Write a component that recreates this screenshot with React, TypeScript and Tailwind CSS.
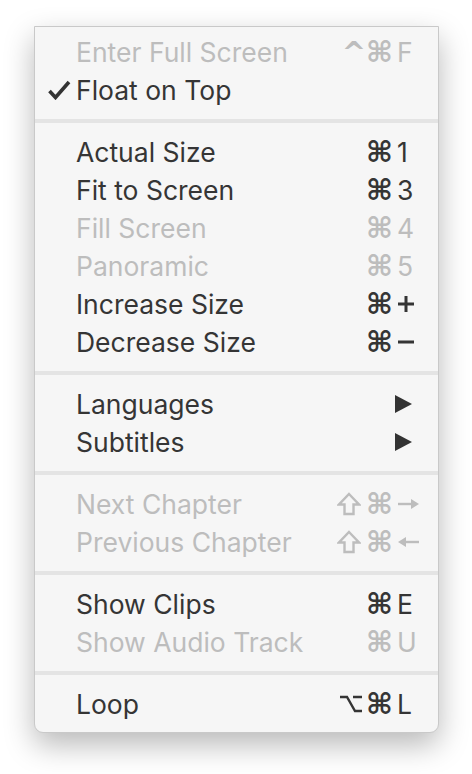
import React from "react";

type Item = {
  label: string;
  mods?: string;
  keyChar?: string;
  disabled?: boolean;
  checked?: boolean;
  submenu?: boolean;
};

const sections: Item[][] = [
  [
    { label: "Enter Full Screen", mods: "^⌘", keyChar: "F", disabled: true },
    { label: "Float on Top", checked: true },
  ],
  [
    { label: "Actual Size", mods: "⌘", keyChar: "1" },
    { label: "Fit to Screen", mods: "⌘", keyChar: "3" },
    { label: "Fill Screen", mods: "⌘", keyChar: "4", disabled: true },
    { label: "Panoramic", mods: "⌘", keyChar: "5", disabled: true },
    { label: "Increase Size", mods: "⌘", keyChar: "+" },
    { label: "Decrease Size", mods: "⌘", keyChar: "−" },
  ],
  [
    { label: "Languages", submenu: true },
    { label: "Subtitles", submenu: true },
  ],
  [
    { label: "Next Chapter", mods: "⇧⌘", keyChar: "→", disabled: true },
    { label: "Previous Chapter", mods: "⇧⌘", keyChar: "←", disabled: true },
  ],
  [
    { label: "Show Clips", mods: "⌘", keyChar: "E" },
    { label: "Show Audio Track", mods: "⌘", keyChar: "U", disabled: true },
  ],
  [{ label: "Loop", mods: "⌥⌘", keyChar: "L" }],
];

function Check() {
  return (
    <svg width="26" height="20" viewBox="0 0 26 20" className="absolute left-[12px] top-[9px]">
      <path d="M2.5 11 L8.5 17.5 L22 2" fill="none" stroke="#333" strokeWidth="3.6" strokeLinecap="butt" strokeLinejoin="miter" />
    </svg>
  );
}

function ShiftIcon() {
  return (
    <svg width="24" height="24" viewBox="0 0 24 24" className="mr-[5px]">
      <path d="M12 2 L22 12.5 L16.5 12.5 L16.5 22 L7.5 22 L7.5 12.5 L2 12.5 Z" fill="none" stroke="currentColor" strokeWidth="2.4" strokeLinejoin="miter" />
    </svg>
  );
}

function OptionIcon() {
  return (
    <svg width="24" height="20" viewBox="0 0 24 20" className="mr-[3px]">
      <path d="M1 3 H8 L16 17 H23 M14 3 H23" fill="none" stroke="currentColor" strokeWidth="2.4" />
    </svg>
  );
}

function ArrowIcon({ left }: { left?: boolean }) {
  return (
    <svg width="23" height="14" viewBox="0 0 23 14">
      {left ? (
        <>
          <path d="M22 7 H7" stroke="currentColor" strokeWidth="2.4" />
          <path d="M9 2 L1 7 L9 12 Z" fill="currentColor" />
        </>
      ) : (
        <>
          <path d="M1 7 H16" stroke="currentColor" strokeWidth="2.4" />
          <path d="M14 2 L22 7 L14 12 Z" fill="currentColor" />
        </>
      )}
    </svg>
  );
}

// plus / minus drawn heavier like the system glyphs
function PlusMinus({ minus }: { minus?: boolean }) {
  return (
    <svg width="18" height="18" viewBox="0 0 18 18">
      <path d="M1 9 H17" stroke="currentColor" strokeWidth="3" />
      {!minus && <path d="M9 1 V17" stroke="currentColor" strokeWidth="3" />}
    </svg>
  );
}

function Mods({ mods }: { mods: string }) {
  return (
    <span className="flex items-center pr-[4px]">
      {mods.split("").map((m, i) =>
        m === "⇧" ? (
          <ShiftIcon key={i} />
        ) : m === "⌥" ? (
          <OptionIcon key={i} />
        ) : (
          <span key={i} className="font-['DejaVu_Sans',sans-serif] text-[29px] font-bold">
            {m}
          </span>
        )
      )}
    </span>
  );
}

function KeyChar({ k }: { k: string }) {
  if (k === "→") return <ArrowIcon />;
  if (k === "←") return <ArrowIcon left />;
  if (k === "+") return <PlusMinus />;
  if (k === "−") return <PlusMinus minus />;
  return <>{k}</>;
}

function Row({ item }: { item: Item }) {
  const color = item.disabled ? "text-[#bdbdbd]" : "text-[#353535]";
  return (
    <div className={`relative flex h-[38px] items-center pl-[41px] pr-[17px] ${color}`}>
      {item.checked && <Check />}
      <span className="flex-1 whitespace-nowrap">{item.label}</span>
      {item.submenu && (
        <svg width="18" height="18" viewBox="0 0 18 18" className="mr-[8px]">
          <path d="M0 0 L17 9 L0 18 Z" fill="#333" />
        </svg>
      )}
      {item.keyChar && (
        <span className="flex items-center">
          {item.mods && <Mods mods={item.mods} />}
          <span className="flex w-[24px] items-center">
            <KeyChar k={item.keyChar} />
          </span>
        </span>
      )}
    </div>
  );
}

export default function App() {
  return (
    <div className="h-[774px] w-[472px] bg-white pl-[34px] pt-[26px]">
      <div className="w-[405px] rounded-b-[9px] border border-[#c9c9c9] bg-[#f6f6f6] pt-[6px] pb-[9px] font-['Inter',sans-serif] text-[26.5px] leading-none shadow-[0_12px_30px_rgba(0,0,0,0.28)]">
        {sections.map((sec, i) => (
          <div key={i}>
            {i > 0 && <div className="my-[10px] h-[4px] bg-[#e4e4e4]" />}
            {sec.map((item) => (
              <Row key={item.label} item={item} />
            ))}
          </div>
        ))}
      </div>
    </div>
  );
}
